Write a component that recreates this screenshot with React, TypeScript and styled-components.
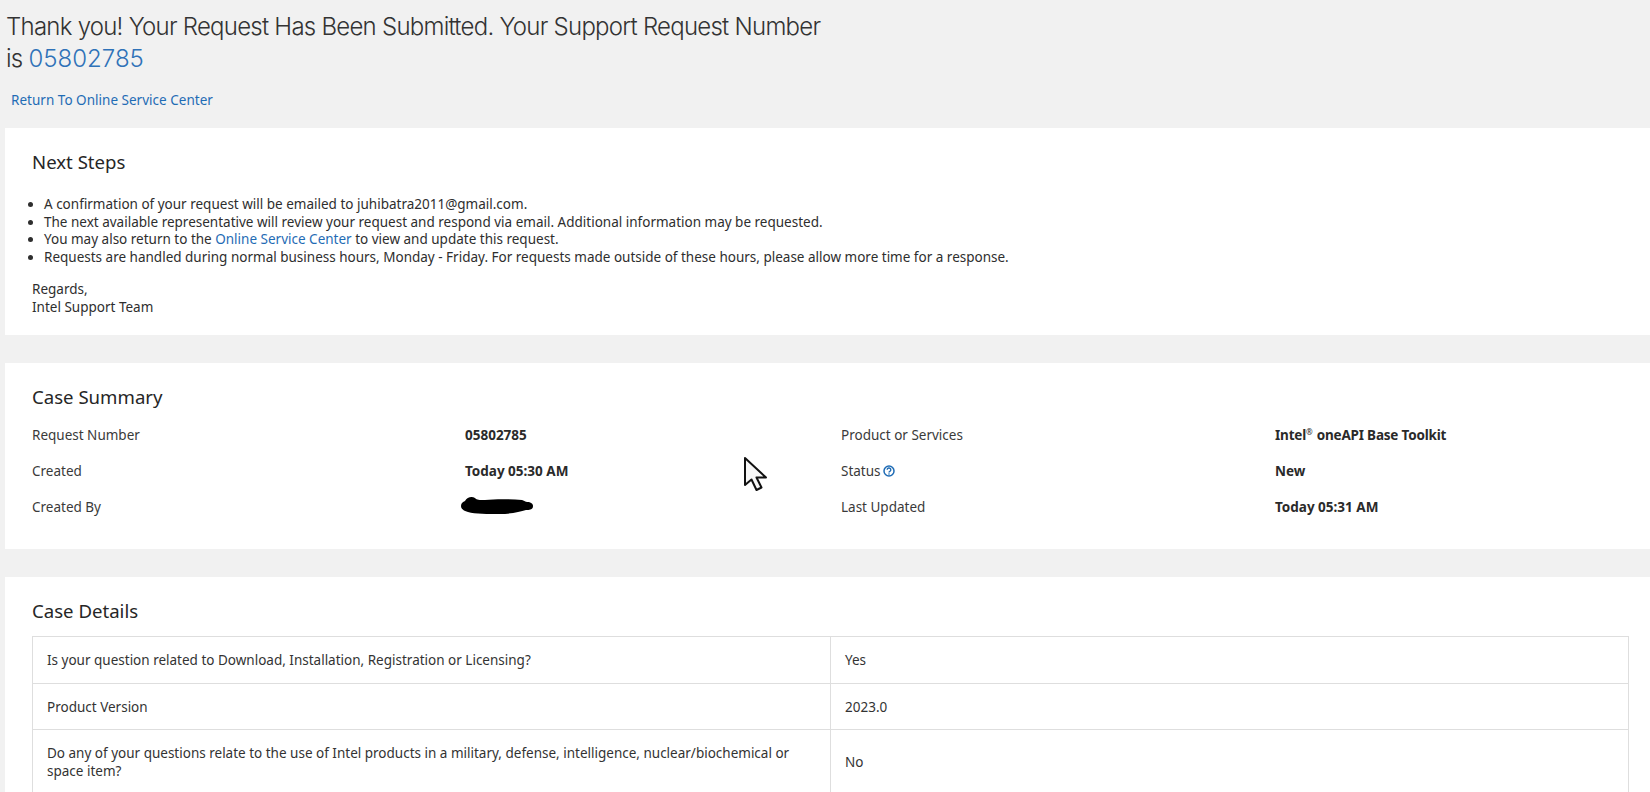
import React from "react";
import styled, { createGlobalStyle } from "styled-components";

const Global = createGlobalStyle`
  html, body { margin: 0; padding: 0; background: #f1f1f1; height: 792px; overflow: hidden; }
  body { font-family: "Noto Sans", "Liberation Sans", sans-serif; color: #2e2e2e; font-size: 13.5px; }
`;
const Page = styled.div`
  width: 1650px; height: 792px; overflow: hidden; padding-left: 5px; box-sizing: border-box;
`;
const Title = styled.h1`
  margin: 0; padding: 11px 0 0 1px; width: 830px; font-family: Inter, sans-serif; font-weight: 300;
  font-size: 24px; line-height: 32px; letter-spacing: -0.75px; color: #333;
`;
const TitleLink = styled.a`color: #2f72b8; letter-spacing: 0;`;
const BackLink = styled.a`
  display: block; margin: 16px 0 19px 6px; height: 18px; line-height: 18px; color: #1f6cb5; font-size: 13.5px; letter-spacing: 0.02px;
`;
const Card = styled.section<{ $h: number }>`
  background: #fff; box-sizing: border-box; height: ${p => p.$h}px; padding: 22px 21px 0 27px; margin-bottom: 28px;
`;
const CardTitle = styled.h2`
  margin: 0; font-size: 18.6px; font-weight: 400; line-height: 24px; color: #262626;
`;
const Steps = styled.ul`
  margin: 22px 0 0; padding: 0 0 0 12px; list-style-position: outside; line-height: 17.7px;
`;
const Link = styled.a`color: #1f6cb5;`;
const Closing = styled.p`margin: 13px 0 0; line-height: 18px;`;
const Summary = styled.div`
  display: grid; grid-template-columns: 433px 376px 434px 1fr; margin-top: 8px;
`;
const Label = styled.div`height: 36px; line-height: 36px; color: #3a3a3a;`;
const Value = styled.div<{ $tight?: boolean }>`
  height: 36px; line-height: 36px; font-weight: 700; color: #2a2a2a; letter-spacing: ${p => p.$tight ? "-0.2px" : "0"};
`;
const Mark = styled.sup`font-size: 8px; font-weight: 400; line-height: 0; vertical-align: 5px; margin-right: 1px;`;
const Help = styled.svg`width: 12px; height: 12px; margin-left: 2px; vertical-align: -1px;`;
const Scribble = styled.svg`width: 74px; height: 20px; vertical-align: -4px; margin-left: -5px;`;
const CursorWrap = styled.svg`position: absolute; left: 743px; top: 456px; width: 26px; height: 37px;`;
const Table = styled.table`
  border-collapse: collapse; width: 1597px; margin-top: 13px; table-layout: fixed;
`;
const Row = styled.tr<{ $h: number }>`height: ${p => p.$h}px;`;
const Cell = styled.td<{ $w?: number }>`
  border: 1px solid #dedede; padding: 0 14px; line-height: 18px; width: ${p => p.$w ? p.$w + "px" : "auto"};
  box-sizing: border-box; color: #333;
`;

export default function App() {
  return (
    <Page>
      <Global />
      <Title>Thank you! Your Request Has Been Submitted. Your Support Request Number is <TitleLink>05802785</TitleLink></Title>
      <BackLink>Return To Online Service Center</BackLink>
      <Card $h={207}>
        <CardTitle>Next Steps</CardTitle>
        <Steps>
          <li>A confirmation of your request will be emailed to juhibatra2011@gmail.com.</li>
          <li>The next available representative will review your request and respond via email. Additional information may be requested.</li>
          <li>You may also return to the <Link>Online Service Center</Link> to view and update this request.</li>
          <li>Requests are handled during normal business hours, Monday - Friday. For requests made outside of these hours, please allow more time for a response.</li>
        </Steps>
        <Closing>Regards,<br />Intel Support Team</Closing>
      </Card>
      <Card $h={186}>
        <CardTitle>Case Summary</CardTitle>
        <Summary>
          <Label>Request Number</Label><Value>05802785</Value>
          <Label>Product or Services</Label><Value $tight>Intel<Mark>®</Mark> oneAPI Base Toolkit</Value>
          <Label>Created</Label><Value>Today 05:30 AM</Value>
          <Label>Status
            <Help viewBox="0 0 12 12"><circle cx="6" cy="6" r="5" fill="none" stroke="#1f6cb5" strokeWidth="1.5" /><path d="M4.2 4.8a1.8 1.8 0 1 1 2.7 1.5c-.6.3-.9.6-.9 1.2" fill="none" stroke="#1f6cb5" strokeWidth="1.4" /><circle cx="6" cy="9" r=".8" fill="#1f6cb5" /></Help>
          </Label><Value>New</Value>
          <Label>Created By</Label>
          <Value><Scribble viewBox="0 0 74 20"><path d="M1 10C1 7 3 6 5 5 7 1 12 0 15 2c2 2 4 2 10 2 10-1 25-1 37 0 3 1 4 2 5 2 4 0 6 2 6 4 0 3-2 4-7 4-6 2-16 4-26 4-12 0-25 0-32-2-4-1-7-3-7-6z" fill="#000" /></Scribble></Value>
          <Label>Last Updated</Label><Value>Today 05:31 AM</Value>
        </Summary>
      </Card>
      <Card $h={260}>
        <CardTitle>Case Details</CardTitle>
        <Table>
          <tbody>
            <Row $h={47}><Cell $w={798}>Is your question related to Download, Installation, Registration or Licensing?</Cell><Cell>Yes</Cell></Row>
            <Row $h={46}><Cell>Product Version</Cell><Cell>2023.0</Cell></Row>
            <Row $h={64}><Cell>Do any of your questions relate to the use of Intel products in a military, defense, intelligence, nuclear/biochemical or space item?</Cell><Cell>No</Cell></Row>
          </tbody>
        </Table>
      </Card>
      <CursorWrap viewBox="0 0 26 37"><path d="M2 2v27l6.5-5.5 5 10.5 5-2.5-5-10h9.5z" fill="#f7f7f7" stroke="#111" strokeWidth="2" strokeLinejoin="round" /></CursorWrap>
    </Page>
  );
}
